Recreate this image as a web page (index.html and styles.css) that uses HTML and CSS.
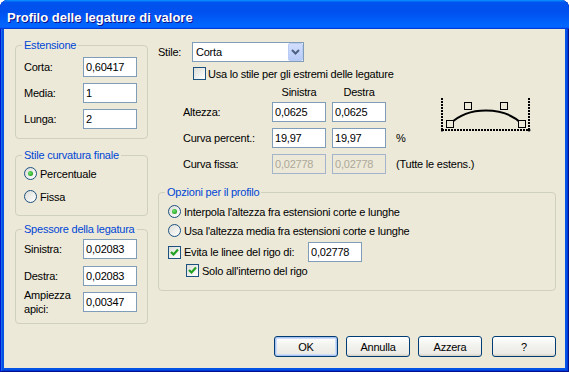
FILE: index.html
```html
<!DOCTYPE html>
<html lang="it">
<head>
    <meta charset="UTF-8">
    <title>Profilo delle legature di valore</title>
    <link rel="stylesheet" href="styles.css">
</head>
<body>
    <div class="window">
        <div class="titlebar">Profilo delle legature di valore</div>

        <div class="body">
            <div class="main">
                <div class="left">
                    <div class="group group-ext">
                        <span class="legend">Estensione</span>
                        <div class="field"><span>Corta:</span><input class="text" type="text" value="0,60417"></div>
                        <div class="field"><span>Media:</span><input class="text" type="text" value="1"></div>
                        <div class="field"><span>Lunga:</span><input class="text" type="text" value="2"></div>
                    </div>

                    <div class="group group-curve">
                        <span class="legend">Stile curvatura finale</span>
                        <div class="option"><span class="radio checked"></span>Percentuale</div>
                        <div class="option"><span class="radio"></span>Fissa</div>
                    </div>

                    <div class="group group-thick">
                        <span class="legend">Spessore della legatura</span>
                        <div class="field"><span>Sinistra:</span><input class="text" type="text" value="0,02083"></div>
                        <div class="field"><span>Destra:</span><input class="text" type="text" value="0,02083"></div>
                        <div class="field"><span class="two-lines">Ampiezza<br>apici:</span><input class="text" type="text" value="0,00347"></div>
                    </div>
                </div>

                <div class="right">
                    <div class="style-row">
                        <span class="style-label">Stile:</span>
                        <div class="combo">
                            <span>Corta</span>
                            <span class="combo-btn">
                                <svg width="9" height="6" viewBox="0 0 9 6"><polyline points="1,1 4.5,4.5 8,1" fill="none" stroke="#4d6185" stroke-width="2"/></svg>
                            </span>
                        </div>
                    </div>

                    <div class="option check-row"><span class="checkbox"></span>Usa lo stile per gli estremi delle legature</div>

                    <div class="params">
                        <span></span>
                        <span class="col-head">Sinistra</span>
                        <span class="col-head">Destra</span>
                        <svg class="diagram" width="90" height="34" viewBox="0 0 90 34">
                            <g fill="none" stroke="#000" stroke-width="2" stroke-dasharray="2 1">
                                <line x1="1" y1="0" x2="1" y2="32"/>
                                <line x1="88" y1="0" x2="88" y2="32"/>
                                <line x1="1" y1="32" x2="88" y2="32"/>
                            </g>
                            <circle cx="1" cy="32" r="1.5"/>
                            <circle cx="88" cy="32" r="1.5"/>
                            <path d="M9 26 C27 8 63 8 81 26" fill="none" stroke="#000" stroke-width="2"/>
                            <g fill="#ece9d8" stroke="#000" stroke-width="1">
                                <rect x="23.5" y="4.5" width="7" height="7"/>
                                <rect x="59.5" y="4.5" width="7" height="7"/>
                                <rect x="5.5" y="22.5" width="7" height="7"/>
                                <rect x="77.5" y="22.5" width="7" height="7"/>
                            </g>
                        </svg>

                        <span class="row-label">Altezza:</span>
                        <input class="text" type="text" value="0,0625">
                        <input class="text" type="text" value="0,0625">

                        <span class="row-label">Curva percent.:</span>
                        <input class="text" type="text" value="19,97">
                        <input class="text" type="text" value="19,97">
                        <span class="unit">%</span>

                        <span class="row-label">Curva fissa:</span>
                        <input class="text" type="text" value="0,02778" disabled>
                        <input class="text" type="text" value="0,02778" disabled>
                        <span class="unit">(Tutte le estens.)</span>
                    </div>

                    <div class="group group-opts">
                        <span class="legend">Opzioni per il profilo</span>
                        <div class="option"><span class="radio checked"></span>Interpola l'altezza fra estensioni corte e lunghe</div>
                        <div class="option opt-2"><span class="radio"></span>Usa l'altezza media fra estensioni corte e lunghe</div>
                        <div class="option opt-avoid">
                            <span class="checkbox checked"><svg width="11" height="11" viewBox="0 0 11 11"><path d="M2 5 L4.5 7.5 L9 2.5" fill="none" stroke="#21a121" stroke-width="2.2"/></svg></span>
                            <span class="avoid-label">Evita le linee del rigo di:</span>
                            <input class="text" type="text" value="0,02778">
                        </div>
                        <div class="option opt-inside">
                            <span class="checkbox checked"><svg width="11" height="11" viewBox="0 0 11 11"><path d="M2 5 L4.5 7.5 L9 2.5" fill="none" stroke="#21a121" stroke-width="2.2"/></svg></span>
                            Solo all'interno del rigo
                        </div>
                    </div>
                </div>
            </div>

            <div class="buttons">
                <button class="btn default">OK</button>
                <button class="btn">Annulla</button>
                <button class="btn">Azzera</button>
                <button class="btn help">?</button>
            </div>
        </div>
    </div>
</body>
</html>
```

FILE: styles.css
```css
html {
    background: #fff;
}
body {
    margin: 0;
    font-family: "Liberation Sans", Arial, sans-serif;
    font-size: 11px;
    letter-spacing: -0.22px;
    color: #000;
}
.window {
    width: 569px;
    height: 372px;
    display: flex;
    flex-direction: column;
    border-radius: 8px 8px 0 0;
    overflow: hidden;
    background: #0553e4;
    box-shadow: inset 1px 0 #0019cf, inset -1px 0 #00138c, inset 0 -1px #00138c, inset 2px 0 #166aee, inset -2px -2px #003bda;
}
.titlebar {
    height: 29px;
    box-sizing: border-box;
    padding: 5px 0 0 7px;
    display: flex;
    align-items: center;
    background: linear-gradient(180deg, #0997ff, #0053ee 8%, #0050ee 40%, #0066ff 88%, #0066ff 93%, #005bff 95%, #003dd7 96%, #003dd7);
    color: #fff;
    font-weight: bold;
    font-size: 13px;
    letter-spacing: 0;
    text-shadow: 1px 1px #0f1089;
}
.body {
    flex: 1;
    margin: 0 4px 4px;
    background: #ece9d8;
    display: flex;
    flex-direction: column;
}
.main {
    display: flex;
    gap: 10px;
    padding: 0 9px 0 11px;
}
.left {
    width: 133px;
    padding-top: 16px;
    display: flex;
    flex-direction: column;
}
.right {
    flex: 1;
    padding-top: 13px;
    display: flex;
    flex-direction: column;
}

/* group boxes */
.group {
    position: relative;
    border: 1px solid #d0d0bf;
    border-radius: 4px;
    display: flex;
    flex-direction: column;
}
.legend {
    position: absolute;
    top: -7px;
    left: 6px;
    padding: 0 2px;
    line-height: 13px;
    background: #ece9d8;
    color: #0046d5;
}
.group-ext {
    padding: 11px 10px 9px 8px;
    gap: 6px;
}
.group-curve {
    margin-top: 16px;
    padding: 11px 8px 12px;
    gap: 10px;
}
.group-thick {
    margin-top: 13px;
    padding: 9px 10px 11px 8px;
    gap: 6.5px;
}
.group-opts {
    margin-top: 18px;
    padding: 12px 9px 13px;
}
.field {
    display: flex;
    justify-content: space-between;
    align-items: center;
    height: 20px;
}
.two-lines {
    line-height: 14px;
}

/* controls */
.text {
    width: 54px;
    height: 20px;
    box-sizing: border-box;
    margin: 0;
    padding: 0 2px;
    border: 1px solid #7f9db9;
    background: #fff;
    color: #000;
    font: inherit;
    letter-spacing: inherit;
    outline: none;
}
.text:disabled {
    background: #ece9d8;
    border-color: #a4b5cb;
    color: #aca899;
    -webkit-text-fill-color: #aca899;
}
.option {
    display: flex;
    align-items: center;
    gap: 3px;
    height: 13px;
}
.radio {
    position: relative;
    width: 13px;
    height: 13px;
    box-sizing: border-box;
    flex: none;
    border: 1px solid #1c5180;
    border-radius: 50%;
    background: linear-gradient(135deg, #dcdcd7, #fff);
}
.radio.checked::after {
    content: '';
    position: absolute;
    left: 3px;
    top: 3px;
    width: 5px;
    height: 5px;
    border-radius: 50%;
    background: radial-gradient(circle at 40% 40%, #6ee66e, #21a121 75%);
}
.checkbox {
    width: 13px;
    height: 13px;
    box-sizing: border-box;
    flex: none;
    border: 1px solid #1c5180;
    background: linear-gradient(135deg, #dcdcd7, #fff);
    display: flex;
}

/* right column */
.style-row {
    display: flex;
    align-items: center;
    height: 20px;
}
.style-label {
    width: 34px;
}
.combo {
    width: 112px;
    height: 20px;
    box-sizing: border-box;
    border: 1px solid #7f9db9;
    background: #fff;
    display: flex;
    align-items: center;
    justify-content: space-between;
    padding-left: 3px;
}
.combo-btn {
    width: 15px;
    height: 18px;
    box-sizing: border-box;
    border: 1px solid #bacbf5;
    border-radius: 2px;
    background: linear-gradient(180deg, #d2defd, #b6cbf7);
    display: flex;
    align-items: center;
    justify-content: center;
}
.check-row {
    margin: 5px 0 0 35px;
    gap: 2px;
}
.params {
    display: grid;
    grid-template-columns: 83px 54px 54px 1fr;
    grid-template-rows: 16px 26px 26px 20px;
    column-gap: 6px;
    margin: 6px 0 0 25px;
}
.col-head {
    text-align: center;
    line-height: 13px;
}
.row-label,
.unit {
    line-height: 20px;
    align-self: start;
}
.unit {
    margin-left: 4px;
    white-space: nowrap;
}
.params .text {
    align-self: start;
}
.diagram {
    grid-column: 4;
    grid-row: 1 / 3;
    margin: 12px 0 0 49px;
}
.opt-2 {
    margin-top: 6px;
}
.opt-avoid {
    margin-top: 5px;
    height: 20px;
}
.avoid-label {
    width: 121px;
}
.opt-inside {
    margin: 2px 0 0 18px;
}

/* buttons */
.buttons {
    margin-top: auto;
    display: flex;
    justify-content: flex-end;
    gap: 8px;
    padding: 0 9px 11px 0;
}
.btn {
    width: 64px;
    height: 21px;
    margin: 0;
    padding: 0;
    border: 1px solid #003c74;
    border-radius: 3px;
    background: linear-gradient(180deg, #fff, #f3f3ef 40%, #ecebe6 86%, #d6d0c5);
    font: inherit;
    letter-spacing: inherit;
    color: #000;
}
.btn.default {
    box-shadow: inset 0 0 0 1px #a9c2f0, inset 0 0 0 2px #cddcfb;
}
.btn.help {
    margin-left: 2px;
}
```
